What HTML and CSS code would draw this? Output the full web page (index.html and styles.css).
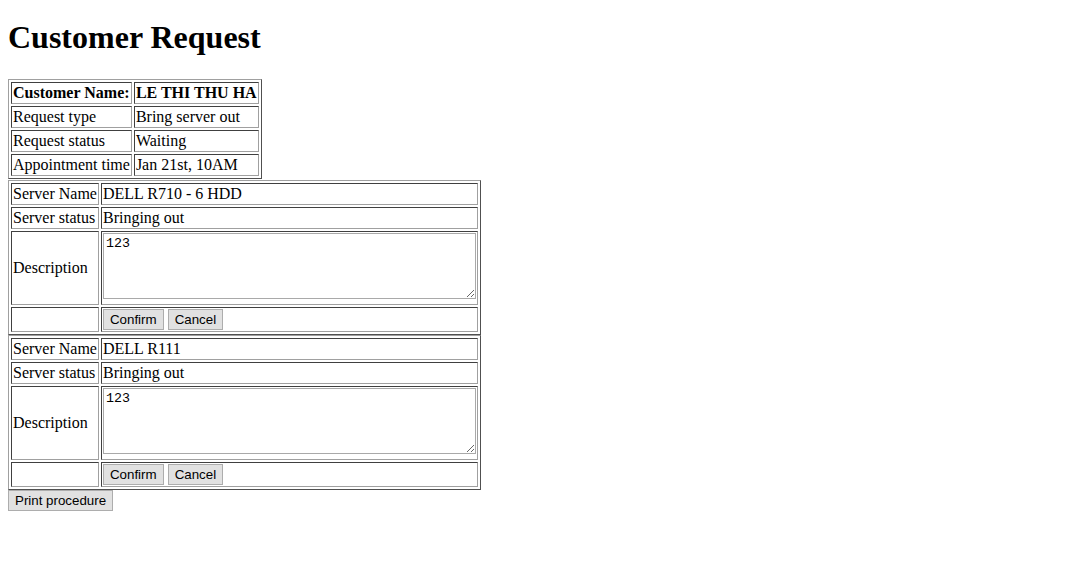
FILE: index.html
```html
<!DOCTYPE html>
<html>
<head>
<meta charset="utf-8">
<title>Customer Request</title>
<link rel="stylesheet" href="styles.css">
</head>
<body>
<h1 class="title">Customer Request</h1>
<table class="grid info">
  <tr><th>Customer Name:</th><th>LE THI THU HA</th></tr>
  <tr><td>Request type</td><td>Bring server out</td></tr>
  <tr><td>Request status</td><td>Waiting</td></tr>
  <tr><td>Appointment time</td><td>Jan 21st, 10AM</td></tr>
</table>
<form class="server-form">
<table class="grid server">
  <tr><td>Server Name</td><td>DELL R710 - 6 HDD</td></tr>
  <tr><td>Server status</td><td>Bringing out</td></tr>
  <tr><td>Description</td><td><textarea class="desc">123</textarea></td></tr>
  <tr><td></td><td><button type="button" class="btn">Confirm</button> <button type="button" class="btn">Cancel</button></td></tr>
</table>
</form>
<form class="server-form">
<table class="grid server">
  <tr><td>Server Name</td><td>DELL R111</td></tr>
  <tr><td>Server status</td><td>Bringing out</td></tr>
  <tr><td>Description</td><td><textarea class="desc">123</textarea></td></tr>
  <tr><td></td><td><button type="button" class="btn">Confirm</button> <button type="button" class="btn">Cancel</button></td></tr>
</table>
</form>
<button type="button" class="btn">Print procedure</button>
</body>
</html>
```
FILE: styles.css
```css
body {
  margin: 8px;
  font-family: "Liberation Serif", "Times New Roman", serif;
  font-size: 16px;
  color: #000;
  background: #fff;
}
.title {
  font-size: 32px;
  font-weight: bold;
  margin: 11px 0 23px 0;
}
.grid {
  border-collapse: separate;
  border-spacing: 2px;
  border: 1px solid #808080;
  border-color: #a0a0a0 #505050 #505050 #a0a0a0;
}
.info {
  margin-bottom: 1px;
}
.grid th,
.grid td {
  border: 1px solid #303030;
  border-color: #404040 #a0a0a0 #a0a0a0 #404040;
  padding: 1px;
  text-align: left;
  vertical-align: middle;
}
.grid th {
  font-weight: bold;
}
.server-form {
  margin: 0;
}
.desc {
  width: 367px;
  height: 60px;
  padding: 2px;
  border: 1px solid #a9a9a9;
  font-family: "Liberation Mono", "Courier New", monospace;
  font-size: 13.33px;
  resize: both;
  margin: 0;
}
.btn {
  font-family: "Liberation Sans", Arial, sans-serif;
  font-size: 13.33px;
  color: #000;
  background: #e1e1e1;
  border: 1px solid #adadad;
  padding: 2px 6px;
  margin: 0;
}
```
